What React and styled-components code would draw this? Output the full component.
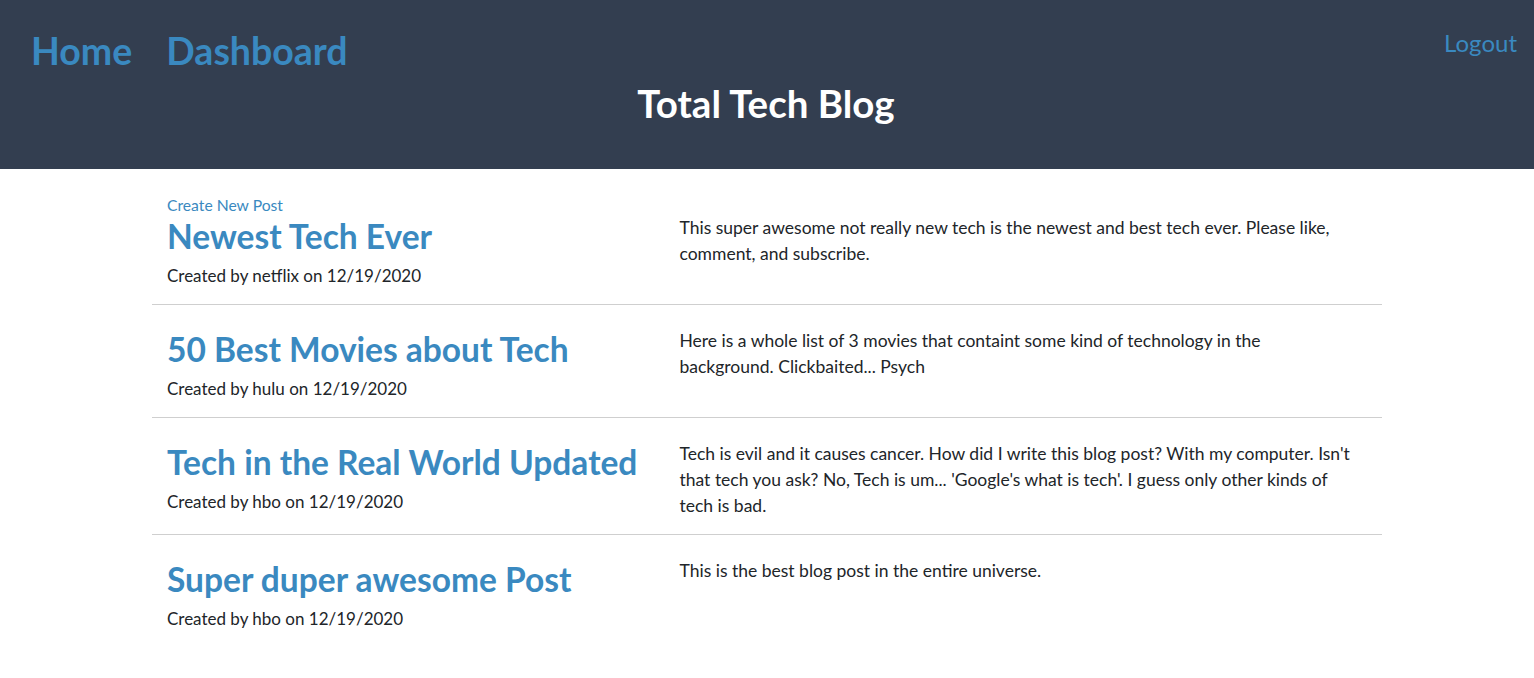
import React from "react";
import styled, { createGlobalStyle } from "styled-components";

const GlobalStyle = createGlobalStyle`
  body {
    margin: 0;
    font-family: "Lato", "Segoe UI", sans-serif;
    color: #212529;
    background: #fff;
  }
  * { box-sizing: border-box; }
`;

// Header
const Header = styled.header`
  background-color: #333e50;
  height: 169px;
  padding: 28px 17px 0 17px;
`;

const TopBar = styled.div`
  display: flex;
  justify-content: space-between;
  align-items: flex-start;
`;

const Nav = styled.nav`
  display: flex;
  gap: 34px;
  margin-left: 14px;
`;

const NavLink = styled.a`
  font-size: 37.5px;
  font-weight: 700;
  line-height: 45px;
  color: #3a89c0;
  text-decoration: none;
`;

const Logout = styled.a`
  font-size: 24px;
  line-height: 30px;
  color: #3a89c0;
  text-decoration: none;
`;

const SiteTitle = styled.h1`
  margin: 8px 0 0;
  padding-right: 2px;
  text-align: center;
  color: #fff;
  font-size: 38.5px;
  font-weight: 700;
  line-height: 44px;
`;

// Content
const Main = styled.main`
  width: 1230px;
  margin: 0 auto;
`;

const PostRow = styled.article`
  display: grid;
  grid-template-columns: 5fr 7fr;
  padding: ${({ $first }) => ($first ? "26px" : "23px")} 0 15px;
  border-bottom: ${({ $last }) => ($last ? "none" : "1px solid #cfcfcf")};
`;

const Col = styled.div`
  padding: 0 ${({ $wide }) => ($wide ? "24px" : "15px")} 0 15px;
`;

const CreateLink = styled.a`
  display: block;
  font-size: 15.7px;
  line-height: 20px;
  color: #3a89c0;
  text-decoration: none;
`;

const PostTitle = styled.h2`
  margin: 2px 0 0;
  font-size: 33.5px;
  font-weight: 700;
  line-height: 38px;
  color: #3a89c0;
`;

const Meta = styled.p`
  margin: 8px 0 0;
  font-size: 17px;
  line-height: 26px;
`;

const Body = styled.p`
  margin: ${({ $first }) => ($first ? "20px" : "0")} 0 0;
  font-size: 17.5px;
  line-height: 26px;
`;

const posts = [
  {
    title: "Newest Tech Ever",
    author: "netflix",
    body: "This super awesome not really new tech is the newest and best tech ever. Please like, comment, and subscribe.",
  },
  {
    title: "50 Best Movies about Tech",
    author: "hulu",
    body: "Here is a whole list of 3 movies that containt some kind of technology in the background. Clickbaited... Psych",
  },
  {
    title: "Tech in the Real World Updated",
    author: "hbo",
    body: "Tech is evil and it causes cancer. How did I write this blog post? With my computer. Isn't that tech you ask? No, Tech is um... 'Google's what is tech'. I guess only other kinds of tech is bad.",
  },
  {
    title: "Super duper awesome Post",
    author: "hbo",
    body: "This is the best blog post in the entire universe.",
  },
];

export default function App() {
  return (
    <>
      <GlobalStyle />
      <Header>
        <TopBar>
          <Nav>
            <NavLink href="#">Home</NavLink>
            <NavLink href="#">Dashboard</NavLink>
          </Nav>
          <Logout href="#">Logout</Logout>
        </TopBar>
        <SiteTitle>Total Tech Blog</SiteTitle>
      </Header>
      <Main>
        {posts.map((post, i) => (
          <PostRow key={post.title} $first={i === 0} $last={i === posts.length - 1}>
            <Col>
              {i === 0 && <CreateLink href="#">Create New Post</CreateLink>}
              <PostTitle>{post.title}</PostTitle>
              <Meta>
                Created by {post.author} on 12/19/2020
              </Meta>
            </Col>
            <Col $wide>
              <Body $first={i === 0}>{post.body}</Body>
            </Col>
          </PostRow>
        ))}
      </Main>
    </>
  );
}
